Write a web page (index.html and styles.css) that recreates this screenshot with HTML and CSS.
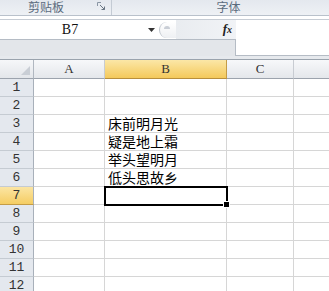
FILE: index.html
```html
<!DOCTYPE html>
<html>
<head>
<meta charset="utf-8">
<link rel="stylesheet" href="styles.css">
</head>
<body>
<div class="ribbon">
  <div class="group clip"><span class="glabel">剪贴板</span><span class="launcher"><svg width="9" height="9" viewBox="0 0 9 9"><path d="M0.5 4V0.5H4" fill="none" stroke="#8a96a4"/><path d="M3 3L7.5 7.5M7.5 4.5V7.5H4.5" fill="none" stroke="#6a7684"/></svg></span></div>
  <div class="group font"><span class="glabel">字体</span></div>
</div>
<div class="fbar">
  <div class="fleft">
    <div class="nrow">
      <div class="namebox">B7</div>
      <div class="arrow"><svg width="7" height="4" viewBox="0 0 7 4"><path d="M0 0H7L3.5 4Z" fill="#333"/></svg></div>
      <div class="expand"><span class="knob"></span></div>
      <div class="fx"><i>f</i><sub>x</sub></div>
    </div>
    <div class="ngray"></div>
  </div>
  <div class="finput"></div>
</div>
<div class="sep"></div>
<div class="grid">
  <div class="corner"><svg width="9" height="9" viewBox="0 0 9 9"><path d="M9 0V9H0Z" fill="#c9ced5"/></svg></div>
  <div class="ch">A</div>
  <div class="ch sel">B</div>
  <div class="ch">C</div>
  <div class="ch last"></div>

  <div class="rh">1</div><div class="c"></div><div class="c"></div><div class="c"></div><div class="c last"></div>
  <div class="rh">2</div><div class="c"></div><div class="c"></div><div class="c"></div><div class="c last"></div>
  <div class="rh">3</div><div class="c"></div><div class="c t">床前明月光</div><div class="c"></div><div class="c last"></div>
  <div class="rh">4</div><div class="c"></div><div class="c t">疑是地上霜</div><div class="c"></div><div class="c last"></div>
  <div class="rh">5</div><div class="c"></div><div class="c t">举头望明月</div><div class="c"></div><div class="c last"></div>
  <div class="rh">6</div><div class="c"></div><div class="c t">低头思故乡</div><div class="c"></div><div class="c last"></div>
  <div class="rh sel">7</div><div class="c"></div><div class="c active"><span class="handle"></span></div><div class="c"></div><div class="c last"></div>
  <div class="rh">8</div><div class="c"></div><div class="c"></div><div class="c"></div><div class="c last"></div>
  <div class="rh">9</div><div class="c"></div><div class="c"></div><div class="c"></div><div class="c last"></div>
  <div class="rh">10</div><div class="c"></div><div class="c"></div><div class="c"></div><div class="c last"></div>
  <div class="rh">11</div><div class="c"></div><div class="c"></div><div class="c"></div><div class="c last"></div>
  <div class="rh">12</div><div class="c"></div><div class="c"></div><div class="c"></div><div class="c last"></div>
</div>
</body>
</html>
```
FILE: styles.css
```css
html, body {
  margin: 0;
  padding: 0;
  width: 329px;
  height: 291px;
  overflow: hidden;
  background: #ffffff;
  font-family: "Liberation Serif", "Noto Sans CJK SC", serif;
}
.ribbon {
  display: flex;
  height: 15px;
  background: linear-gradient(#e4e8ee, #eef1f5);
  border-bottom: 1px solid #b9c1cb;
}
.group {
  display: flex;
  align-items: flex-start;
  height: 15px;
}
.clip {
  width: 111px;
  border-right: 1px solid #c4cbd4;
}
.glabel {
  font-family: "Noto Sans CJK SC", sans-serif;
  font-size: 12px;
  color: #5b6b7d;
  line-height: 13px;
}
.clip .glabel { margin-left: 28px; }
.launcher {
  margin-left: auto;
  margin-right: 5px;
  margin-top: 2px;
  display: flex;
}
.font {
  flex: 1;
  justify-content: center;
  padding-left: 16px;
}
.fbar {
  display: flex;
  margin-top: 3px;
  height: 37px;
  background: #f2f4f7;
}
.fleft {
  width: 236px;
  display: flex;
  flex-direction: column;
}
.nrow {
  display: flex;
  align-items: center;
  height: 19px;
  background: #ffffff;
  border-top: 1px solid #c6ccd4;
  border-bottom: 1px solid #b5bcc5;
}
.namebox {
  width: 143px;
  text-align: center;
  font-size: 14px;
  color: #111;
  line-height: 18px;
  padding-right: 3px;
  box-sizing: border-box;
}
.arrow {
  width: 16px;
  display: flex;
  justify-content: center;
  margin-top: 1px;
}
.expand {
  width: 16px;
  height: 16px;
  border-radius: 8px 0 0 8px;
  border-left: 1px solid #c0c6ce;
  background: linear-gradient(#ffffff, #eef0f3);
  position: relative;
}
.knob {
  position: absolute;
  left: 4px;
  top: 4px;
  width: 6px;
  height: 3px;
  border-radius: 3px 3px 0 0;
  background: #c9ced6;
}
.fx {
  flex: 1;
  height: 19px;
  background: linear-gradient(90deg, #e9ecf0, #f1f3f6);
  text-align: right;
  padding-right: 4px;
  font-family: "Liberation Serif", serif;
  font-weight: bold;
  font-size: 13px;
  line-height: 18px;
  color: #222;
}
.fx sub {
  font-size: 10px;
  vertical-align: 0;
  font-style: italic;
}
.ngray {
  flex: 1;
  background: #e3e6ea;
  border-right: 1px solid #b5bcc5;
}
.finput {
  flex: 1;
  background: #ffffff;
  border-top: 1px solid #c6ccd4;
  border-bottom: 1px solid #b5bcc5;
}
.sep {
  height: 3px;
  background: #e6e9ed;
  border-bottom: 1px solid #9aa3ad;
}
.grid {
  display: grid;
  grid-template-columns: 34px 71px 122px 67px 1fr;
  grid-template-rows: 19px;
  grid-auto-rows: 18px;
}
.corner {
  background: linear-gradient(#f6f7f9, #e3e6ea);
  border-right: 1px solid #b0b7c0;
  border-bottom: 1px solid #9ca3ad;
  display: flex;
  align-items: flex-end;
  justify-content: flex-end;
  padding: 0 3px 3px 0;
}
.ch {
  background: linear-gradient(#f7f8fa, #e4e7eb);
  border-right: 1px solid #c8ccd2;
  border-bottom: 1px solid #9ca3ad;
  text-align: center;
  font-size: 13px;
  line-height: 18px;
  color: #333;
}
.ch.sel {
  background: linear-gradient(#fbe7a7, #f4c95b);
  border-right-color: #c49c46;
  border-bottom-color: #b88f3c;
}
.ch.last, .c.last { border-right: none; }
.rh {
  background: #e4e8ee;
  border-right: 1px solid #a8b0ba;
  border-bottom: 1px solid #c5cbd2;
  text-align: center;
  font-family: "Liberation Mono", monospace;
  font-size: 13px;
  line-height: 18px;
  color: #333;
}
.rh.sel {
  background: linear-gradient(#fbe5a3, #f5cd63);
  border-bottom-color: #c49c46;
}
.c {
  border-right: 1px solid #d6d6d6;
  border-bottom: 1px solid #d6d6d6;
  position: relative;
}
.t {
  font-family: "Noto Sans CJK SC", sans-serif;
  font-size: 14px;
  line-height: 17px;
  color: #000;
  padding-left: 3px;
  white-space: nowrap;
}
.active {
  outline: 2px solid #000;
  outline-offset: -1px;
  z-index: 1;
}
.handle {
  position: absolute;
  right: -4px;
  bottom: -4px;
  width: 5px;
  height: 5px;
  background: #000;
  border: 1px solid #fff;
}
```
